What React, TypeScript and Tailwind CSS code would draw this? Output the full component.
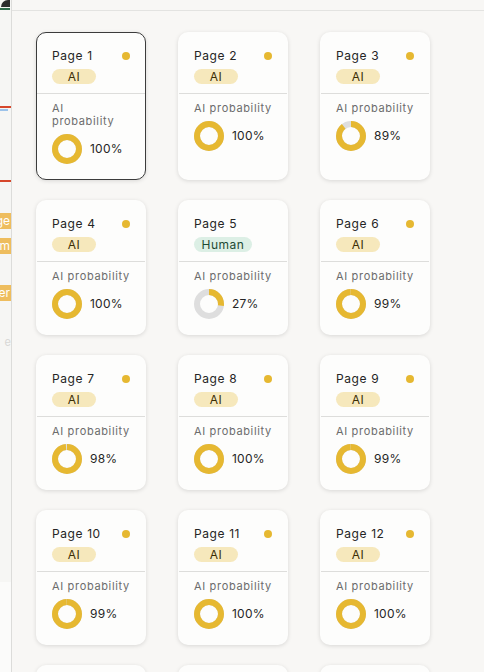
import type { ReactNode } from "react";

const YELLOW = "#e6b831";

type PageResult = { page: number; label: "AI" | "Human"; prob: number };

const pages: PageResult[] = [
  { page: 1, label: "AI", prob: 100 },
  { page: 2, label: "AI", prob: 100 },
  { page: 3, label: "AI", prob: 89 },
  { page: 4, label: "AI", prob: 100 },
  { page: 5, label: "Human", prob: 27 },
  { page: 6, label: "AI", prob: 99 },
  { page: 7, label: "AI", prob: 98 },
  { page: 8, label: "AI", prob: 100 },
  { page: 9, label: "AI", prob: 99 },
  { page: 10, label: "AI", prob: 99 },
  { page: 11, label: "AI", prob: 100 },
  { page: 12, label: "AI", prob: 100 },
  { page: 13, label: "AI", prob: 100 },
  { page: 14, label: "AI", prob: 100 },
  { page: 15, label: "AI", prob: 100 },
];

function cn(...parts: Array<string | false | null | undefined>) {
  return parts.filter(Boolean).join(" ");
}

function Donut({ value }: { value: number }) {
  const r = 12;
  const c = 2 * Math.PI * r;
  return (
    <svg width="30" height="30" viewBox="0 0 30 30" className="shrink-0">
      <circle cx="15" cy="15" r={r} fill="none" stroke="#dedede" strokeWidth="6" />
      <circle
        cx="15"
        cy="15"
        r={r}
        fill="none"
        stroke={YELLOW}
        strokeWidth="6"
        strokeDasharray={`${(c * value) / 100} ${c}`}
        transform="rotate(-90 15 15)"
      />
    </svg>
  );
}

function Badge({ label }: { label: "AI" | "Human" }) {
  return (
    <span
      className={cn(
        "flex h-[15px] items-center justify-center rounded-full text-[12px] leading-none tracking-[0.04em]",
        label === "AI"
          ? "w-[44px] bg-[#f6e8bc] text-[#3b2e06]"
          : "w-[58px] bg-[#dcefe5] text-[#1d4a33]",
      )}
    >
      {label}
    </span>
  );
}

function PageCard({ item, selected }: { item: PageResult; selected?: boolean }) {
  return (
    <section
      className={cn(
        "flex flex-col rounded-[10px] bg-[#fdfdfc] shadow-[0_1px_4px_rgba(0,0,0,0.13)]",
        selected ? "border border-[#3c3c3c]" : "border border-transparent",
      )}
    >
      <div className="flex flex-col gap-[6px] border-b border-[#dddddb] px-[15px] pb-[9px] pt-[16px]">
        <div className="flex h-[14px] items-center justify-between">
          <span className="text-[12px] leading-[14px] tracking-[0.05em] text-[#252525]">
            Page {item.page}
          </span>
          {item.label === "AI" ? (
            <span className="h-2 w-2 rounded-full" style={{ backgroundColor: YELLOW }} />
          ) : null}
        </div>
        <div className="flex">
          <Badge label={item.label} />
        </div>
      </div>
      <div className="flex flex-col gap-[6px] px-[15px] pb-[15px] pt-[8px]">
        <p
          className={cn(
            "text-[11px] leading-[13px] tracking-[0.06em] text-[#6c6c6c]",
            selected && "w-[60px]",
          )}
        >
          AI probability
        </p>
        <div className="flex items-center gap-2">
          <Donut value={item.prob} />
          <span className="text-[12px] leading-[14px] tracking-[0.02em] text-[#252525]">
            {item.prob}%
          </span>
        </div>
      </div>
    </section>
  );
}

function SideChip({ children }: { children: ReactNode }) {
  return (
    <div className="flex h-[16px] items-center justify-end overflow-hidden bg-[#eebd5e] pr-[1px] text-[12px] leading-none text-white">
      {children}
    </div>
  );
}

function SideStrip() {
  return (
    <aside className="flex w-[12px] shrink-0 flex-col border-r border-[#dcdcda] bg-[#f6f6f4]">
      <div className="h-[10px] w-[10px] border-b-2 border-[#2f6b4a]">
        <div className="ml-[1px] h-[7px] w-[9px] rounded-tl-full bg-[#2c2c2c]" />
      </div>
      <div className="mt-[96px] h-[2px] w-[11px] bg-[#d6472b]" />
      <div className="mt-[1px] h-[2px] w-[8px] bg-[#9cc3ea]" />
      <div className="mt-[69px] h-[2px] w-[11px] bg-[#d6472b]" />
      <div className="mt-[31px]">
        <SideChip>ge</SideChip>
      </div>
      <div className="mt-[9px]">
        <SideChip>m</SideChip>
      </div>
      <div className="mt-[31px]">
        <SideChip>er</SideChip>
      </div>
      <div className="mt-[36px] overflow-hidden text-right text-[11px] leading-none text-[#d8d8d6]">
        e
      </div>
      <div className="mt-[234px] flex-1 bg-[#fbfbfa]" />
    </aside>
  );
}

export default function App() {
  return (
    <main
      className="flex h-[672px] w-[484px] overflow-hidden bg-[#f8f7f5]"
      style={{ fontFamily: "Inter, 'Noto Sans', sans-serif" }}
    >
      <SideStrip />
      <div className="flex min-w-0 flex-1 flex-col">
        <div className="h-[11px] shrink-0 border-b border-[#e3e3e1]" />
        <div className="grid grid-cols-[110px_110px_110px] gap-x-[32px] gap-y-[20px] pl-[24px] pt-[21px]">
          {pages.map((item) => (
            <PageCard key={item.page} item={item} selected={item.page === 1} />
          ))}
        </div>
      </div>
    </main>
  );
}
